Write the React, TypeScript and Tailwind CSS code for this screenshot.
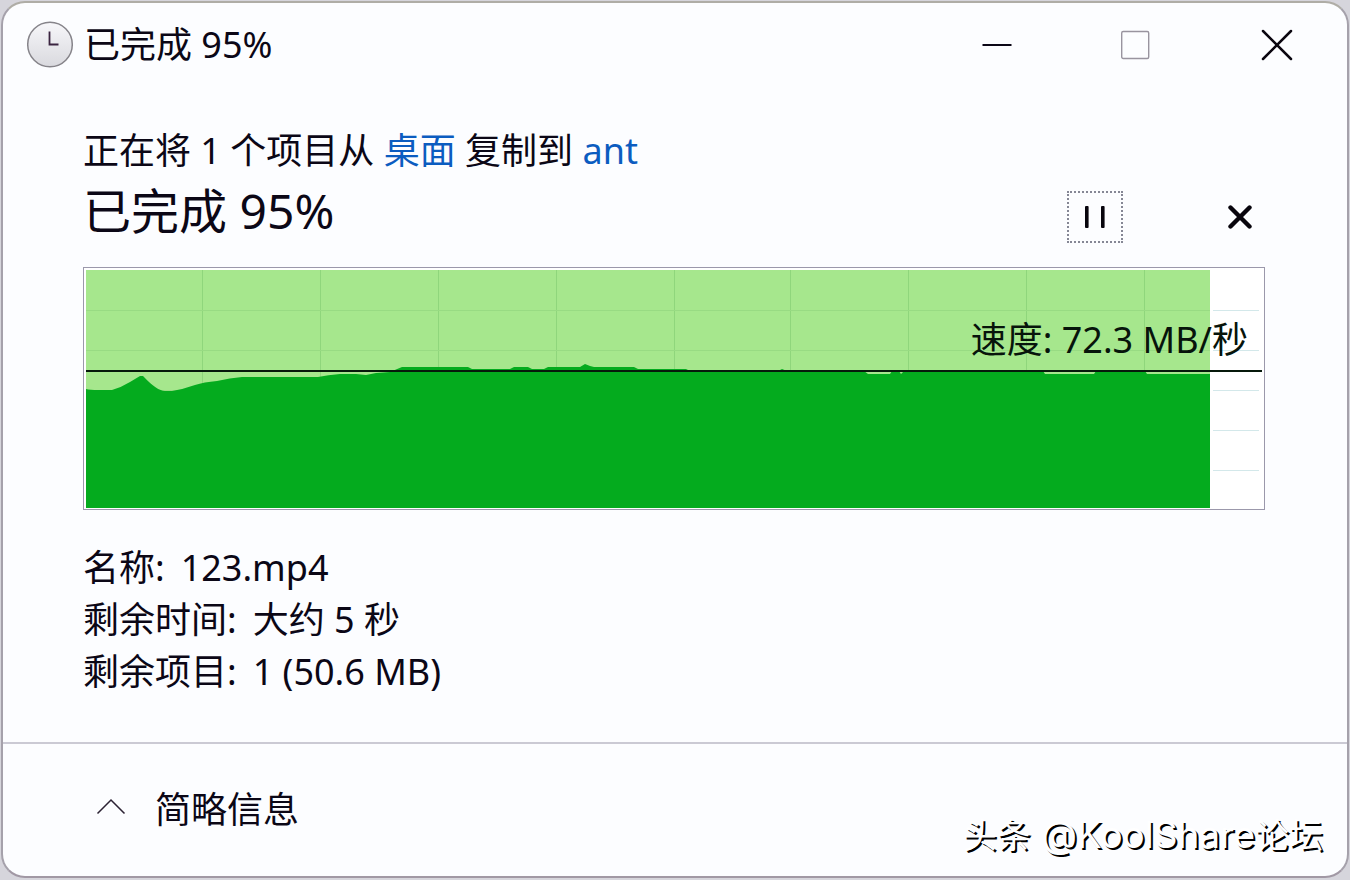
import { ReactNode } from "react"

const gridX = [203, 321, 439, 557, 675, 791, 909, 1027, 1145]
const gridY = [310, 350, 390, 430, 470]

const speedPath =
    "M86 389 Q90 390 98 390 H112 Q122 387 130 382 L140 376 L143 376 Q157 391 165 391 H172 Q184 389 195 385 Q204 382 217 381 Q230 378 242 377 H318 Q328 375 340 374 H356 L366 375 L376 373 L390 372 L402 367 H468 L472 369 H510 L514 367 H528 L532 369 H544 L548 367 H580 L585 364 L590 366 L594 367 H634 L638 369 H686 L690 371 H778 L782 369 L787 371 H864 L868 374 H890 L892 371 H899 L901 374 L904 371 H1043 L1045 374 H1094 L1096 371 H1145 L1147 374 H1210 V508 H86 Z"

const details = [
    { label: "名称:", value: "123.mp4" },
    { label: "剩余时间:", value: "大约 5 秒" },
    { label: "剩余项目:", value: "1 (50.6 MB)" },
]

const ClockIcon = () => (
    <svg viewBox="0 0 48 48" className="size-12" fill="none" aria-hidden="true">
        <defs>
            <linearGradient id="clock-face" x1="0" y1="0" x2="0" y2="1">
                <stop offset="0" stopColor="#f7f7fa" />
                <stop offset="1" stopColor="#d9d9de" />
            </linearGradient>
        </defs>
        <circle cx="24" cy="23.5" r="22.3" fill="url(#clock-face)" stroke="#86848a" strokeWidth="1.5" />
        <path d="M23.5 10.5V23.5H32.5" stroke="#3a2440" strokeWidth="1.8" />
    </svg>
)

const WindowButton = ({ label, children }: { label: string; children: ReactNode }) => (
    <button type="button" aria-label={label} className="w-[140px] h-full flex items-center justify-center">
        <svg viewBox="0 0 32 32" className="size-8" fill="none" aria-hidden="true">
            {children}
        </svg>
    </button>
)

const SpeedChart = () => (
    <div className="relative mt-6 h-[243px] border border-[#9b98ab] bg-white">
        <svg viewBox="84 268 1180 241" preserveAspectRatio="none" className="block w-full h-full" aria-hidden="true">
            {gridY.map((y) => (
                <path key={y} d={`M1213 ${y + 0.5}H1259`} stroke="#d3e8ea" />
            ))}
            <rect x="86" y="270" width="1124" height="238" fill="#a6e78d" />
            {gridX.map((x) => (
                <path key={x} d={`M${x - 0.5} 270V508`} stroke="#8fd67c" />
            ))}
            {gridY.map((y) => (
                <path key={y} d={`M86 ${y + 0.5}H1210`} stroke="#98db83" />
            ))}
            <path d={speedPath} fill="#04ab1e" />
            <path d="M86 371H1262" stroke="#06190b" strokeWidth="2" />
        </svg>
        <p className="absolute right-4 top-12 text-4xl leading-[48px] text-[#07140b]">速度: 72.3 MB/秒</p>
    </div>
)

const App = () => {
    return (
        <div className="min-h-screen flex p-px pb-0.5 bg-[#d6d5dc] font-['Noto_Sans','Noto_Sans_CJK_SC',sans-serif] font-normal text-[#0b0716]">
            <div className="relative flex-1 flex flex-col rounded-3xl border-2 border-t-[#afada6] border-x-[#a5a1ab] border-b-[#a198a4] bg-[#fcfdff] overflow-hidden">
                <header className="h-[84px] flex items-center justify-between pl-[23px]">
                    <div className="flex items-center gap-2.5">
                        <ClockIcon />
                        <h1 className="text-4xl leading-[48px]">已完成 95%</h1>
                    </div>
                    <div className="h-full flex">
                        <WindowButton label="最小化">
                            <path d="M1.5 16H30.5" stroke="#0b0716" strokeWidth="1.8" />
                        </WindowButton>
                        <WindowButton label="最大化">
                            <rect x="0.7" y="2.5" width="27" height="27" rx="1.5" stroke="#99949f" strokeWidth="1.4" />
                        </WindowButton>
                        <WindowButton label="关闭">
                            <path d="M2 2L30 30M30 2L2 30" stroke="#0b0710" strokeWidth="2.5" strokeLinecap="round" />
                        </WindowButton>
                    </div>
                </header>

                <main className="pl-20 pr-[82px] pt-10 pb-11">
                    <p className="text-4xl leading-[48px]">
                        正在将 1 个项目从{" "}
                        <a href="#desktop" className="text-[#0b5cc0]">
                            桌面
                        </a>{" "}
                        复制到{" "}
                        <a href="#ant" className="text-[#0b5cc0]">
                            ant
                        </a>
                    </p>
                    <div className="h-[68px] flex items-end justify-between">
                        <h2 className="text-5xl leading-[64px]">已完成 95%</h2>
                        <div className="flex gap-[92px]">
                            <button
                                type="button"
                                aria-label="暂停"
                                className="w-14 h-[52px] flex items-center justify-center border-2 border-dotted border-[#858795]">
                                <svg viewBox="0 0 24 24" className="size-6" aria-hidden="true">
                                    <rect x="2" y="1" width="3.6" height="22" rx="1" fill="#08050d" />
                                    <rect x="18" y="1" width="3.6" height="22" rx="1" fill="#08050d" />
                                </svg>
                            </button>
                            <button
                                type="button"
                                aria-label="取消"
                                className="w-[50px] h-[52px] flex items-center justify-center">
                                <svg viewBox="0 0 24 24" className="size-6" fill="none" aria-hidden="true">
                                    <path
                                        d="M2.5 2.5L21.5 21.5M21.5 2.5L2.5 21.5"
                                        stroke="#08050d"
                                        strokeWidth="4.4"
                                        strokeLinecap="round"
                                    />
                                </svg>
                            </button>
                        </div>
                    </div>

                    <SpeedChart />

                    <dl className="mt-8 text-4xl leading-[52px]">
                        {details.map(({ label, value }) => (
                            <div key={label} className="flex gap-4">
                                <dt>{label}</dt>
                                <dd>{value}</dd>
                            </div>
                        ))}
                    </dl>
                </main>

                <footer className="flex-1 flex items-center px-[92px] border-t-2 border-[#cbcad4]">
                    <button type="button" className="flex items-center gap-7 text-4xl leading-[48px]">
                        <svg viewBox="0 0 32 32" className="size-8" fill="none" aria-hidden="true">
                            <path d="M2.5 19.5L16 6L29.5 19.5" stroke="#2b2233" strokeWidth="1.5" />
                        </svg>
                        简略信息
                    </button>
                </footer>

                <p className="absolute right-6 bottom-4 font-['Inter','Noto_Sans_CJK_SC',sans-serif] font-normal text-[37px] leading-[48px] text-white [text-shadow:2px_2px_0_#000]">
                    <span className="text-[34px]">头条</span> @KoolShare<span className="text-[34px]">论坛</span>
                </p>
            </div>
        </div>
    )
}

export default App
